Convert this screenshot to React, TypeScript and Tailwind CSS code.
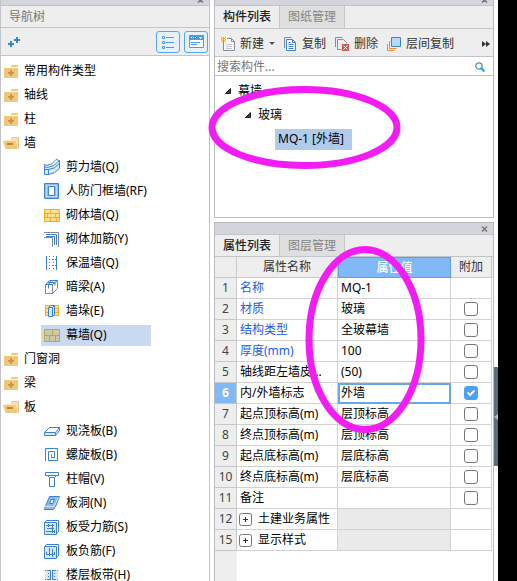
import { useState, type ReactNode } from "react"
import clsx from "clsx"

interface TreeItem {
  label: string
  icon?: ReactNode
  open?: boolean
}

interface Property {
  no: number
  name: string
  value?: string
  link?: boolean
  check?: boolean
  group?: boolean
}

const BLUE = "#3b84d4"
const PALE = "#d9e8fa"

function Icon({ children, size = 16 }: { children: ReactNode; size?: number }) {
  return (
    <svg
      width={size}
      height={size}
      viewBox={`0 0 ${size} ${size}`}
      fill="none"
      stroke={BLUE}
      className="shrink-0"
      aria-hidden="true"
    >
      {children}
    </svg>
  )
}

const ShearWallIcon = (
  <Icon>
    <path d="M.5 7.500L3 8.500Q10 8 15.500 1.500V9.500Q11 15 4.500 15.500H.5Z" fill={PALE} />
    <path d="M.5 10.500H4.500V15.500M.5 8V5.500L3 6.500Q9 5.500 12 .500L15.500 1.500M4.500 10.500Q11 10 15.500 4.500" />
  </Icon>
)

const FrameWallIcon = (
  <Icon>
    <path d="M.5.5h14v15H.5z" fill="#8db9ee" />
    <path d="M2.500 2.500h10v11h-10z" stroke="#c3dbf7" />
    <path d="M4.500 3.500h6v9h-6z" fill="#fff" />
  </Icon>
)

const MasonryIcon = (
  <Icon>
    <path
      d="M.5 2.500h15v12H.5zM.5 6.500h15M.5 10.500h15M6.500 2.500v4M3.500 6.500v4M11.500 6.500v4M6.500 10.500v4M12.500 10.500v4"
      fill="#ffdf94"
      stroke="#f9ae12"
    />
  </Icon>
)

const MasonryBarIcon = (
  <Icon>
    <path d="M0 1.500h14.500V16M0 6.500h8.500V16" stroke="#80898f" />
    <path d="M2 3.500h10.500V14M2 5.500h8.500V14" />
  </Icon>
)

const InsulationIcon = (
  <Icon>
    <path d="M2.500 1v14M12.500 1v14" />
    <path d="M5.500 1v14M9.500 1v14" strokeDasharray="1 2" />
    <path d="M2 4.500h11M2 10.500h11" strokeDasharray="1 2" />
  </Icon>
)

const HiddenBeamIcon = (
  <Icon>
    <path d="M1.500 5.500h7v9h-7zM8.500 14.500l5-5v-8" stroke="#80898f" fill="#fff" />
    <path d="M1.500 5.500l4-4h8l-5 4zM3.500 3.500h8M7.500 1.500l-3 4v4M11 3.500v3" fill={PALE} />
  </Icon>
)

const PierIcon = (
  <Icon>
    <path d="M1.500 2.500h13v10h-13zM1.500 5.500h13M1.500 9.500h13" fill="#ffdf94" stroke="#f9ae12" />
    <path d="M4.500 4.500l2-2h4v9l-2 2h-4zM4.500 4.500h4v9M8.500 4.500l2-2" fill={PALE} />
  </Icon>
)

const CurtainIcon = (
  <Icon>
    <path
      d="M.5 2.500h15v12H.5zM.5 8.500h15M8.500 2.500v6M5.500 8.500v6M11.500 8.500v6"
      fill="#c9c9a8"
      stroke="#c2a54a"
    />
  </Icon>
)

const SlabIcon = (
  <Icon>
    <path d="M.5 9.500l5-5h10v3l-4 5H.5z" fill={PALE} />
    <path d="M.5 9.500l5-5h10l-4 5zM11.500 9.500v3" fill="#fff" />
  </Icon>
)

const SpiralIcon = (
  <Icon>
    <path d="M1.500 14V1.500h12v12h-9v-9h6v6h-3v-3" />
  </Icon>
)

const CapitalIcon = (
  <Icon>
    <path d="M1.500 1.500h13v3h-13zM3.500 4.500l2 2h5l2-2M5.500 6.500v9h5v-9" fill="#fff" />
  </Icon>
)

const HoleIcon = (
  <Icon>
    <path d="M.5 13.500L5.500 1.500h10l-4 10-2 3H.5z" fill="#8db9ee" />
    <path d="M1 11.500h9l4.500-9" stroke={PALE} />
    <path d="M5.500 8.500l2-4h3l-2 4z" fill="#fff" />
  </Icon>
)

const SlabBarIcon = (
  <Icon>
    <path d="M.5 3.500l2-2h12v11l-2 2" fill="#fff" />
    <path d="M.5 3.500h12v12H.5z" fill={PALE} />
    <path d="M2 6.500h8M2 12.500h9M4.500 5v3M8.500 5v9M10.500 11v3M3 9.500h7" />
  </Icon>
)

const NegBarIcon = (
  <Icon>
    <path d="M.5 3.500l2-2h12v11l-2 2" fill="#fff" />
    <path d="M.5 3.500h12v12H.5z" fill={PALE} />
    <path d="M5.500 5v6M8.500 6v8M2.500 11V9M10.500 11V9M2 11.500h9M5.500 11v2" />
  </Icon>
)

const StripIcon = (
  <Icon>
    <path d="M1 3h13v10H1z" fill={PALE} stroke="none" />
    <path d="M1 3.500h13M1 12.500h13" strokeDasharray="1 1" />
    <path d="M4.500 3v10M10.500 3v10" strokeDasharray="1 2" />
    <path d="M7.500 3v10" stroke="#fff" strokeWidth="2" />
    <path d="M6.500 3v10M8.500 3v10" />
  </Icon>
)

function FolderIcon({ open }: { open?: boolean }) {
  return open ? (
    <svg width="16" height="12" viewBox="0 0 16 12" className="-ml-px shrink-0" aria-hidden="true">
      <path d="M3 3h5l1-2h7v10H4z" fill="#f7dfae" />
      <path d="M8 2.500L9.500.500h6v11" fill="none" stroke="#eec87e" />
      <path d="M0 4h12.500L15 12H2.500z" fill="#eec87e" />
      <path d="M4 6h6v2H4z" fill="#b98a2c" />
    </svg>
  ) : (
    <svg width="16" height="13" viewBox="0 0 16 13" className="-ml-px shrink-0" aria-hidden="true">
      <path d="M1 3h14v10H1zM8 1l1-1h5l1 1v1H8z" fill="#eec87e" />
      <path d="M5 7h2V5h2v2h2v2H9v2H7V9H5z" fill="#c99a3c" />
    </svg>
  )
}

const tree: TreeItem[] = [
  { label: "常用构件类型" },
  { label: "轴线" },
  { label: "柱" },
  { label: "墙", open: true },
  { label: "剪力墙(Q)", icon: ShearWallIcon },
  { label: "人防门框墙(RF)", icon: FrameWallIcon },
  { label: "砌体墙(Q)", icon: MasonryIcon },
  { label: "砌体加筋(Y)", icon: MasonryBarIcon },
  { label: "保温墙(Q)", icon: InsulationIcon },
  { label: "暗梁(A)", icon: HiddenBeamIcon },
  { label: "墙垛(E)", icon: PierIcon },
  { label: "幕墙(Q)", icon: CurtainIcon },
  { label: "门窗洞" },
  { label: "梁" },
  { label: "板", open: true },
  { label: "现浇板(B)", icon: SlabIcon },
  { label: "螺旋板(B)", icon: SpiralIcon },
  { label: "柱帽(V)", icon: CapitalIcon },
  { label: "板洞(N)", icon: HoleIcon },
  { label: "板受力筋(S)", icon: SlabBarIcon },
  { label: "板负筋(F)", icon: NegBarIcon },
  { label: "楼层板带(H)", icon: StripIcon },
]

const properties: Property[] = [
  { no: 1, name: "名称", value: "MQ-1", link: true },
  { no: 2, name: "材质", value: "玻璃", link: true, check: false },
  { no: 3, name: "结构类型", value: "全玻幕墙", link: true, check: false },
  { no: 4, name: "厚度(mm)", value: "100", link: true, check: false },
  { no: 5, name: "轴线距左墙皮...", value: "(50)", check: false },
  { no: 6, name: "内/外墙标志", value: "外墙", check: true },
  { no: 7, name: "起点顶标高(m)", value: "层顶标高", check: false },
  { no: 8, name: "终点顶标高(m)", value: "层顶标高", check: false },
  { no: 9, name: "起点底标高(m)", value: "层底标高", check: false },
  { no: 10, name: "终点底标高(m)", value: "层底标高", check: false },
  { no: 11, name: "备注", value: "", check: false },
  { no: 12, name: "土建业务属性", group: true },
  { no: 15, name: "显示样式", group: true },
]

// Grey strip above each docked panel
function DockBar({ short }: { short?: boolean }) {
  return (
    <div
      className={clsx(
        "flex shrink-0 items-end justify-end overflow-hidden border-b border-[#c3c4c9] bg-[#d4d5da] pr-[5px]",
        short ? "h-[6px] pb-[2px]" : "h-3 pb-[2px]",
      )}
    >
      <button type="button" aria-label="关闭">
        <svg width="7" height="6" viewBox="0 0 7 6" className="block" stroke="#77787c" strokeWidth="1.500">
          <path d="M1 .5l5 5M6 .5l-5 5" />
        </svg>
      </button>
    </div>
  )
}

function Tabs({ labels, compact }: { labels: string[]; compact?: boolean }) {
  return (
    <div
      role="tablist"
      className={clsx("flex shrink-0 border-b border-[#c3c4c9] bg-[#eeeeee]", compact ? "h-[22px]" : "h-[23px]")}
    >
      {labels.map((label, i) => (
        <button
          key={label}
          type="button"
          role="tab"
          aria-selected={i === 0}
          className={clsx(
            "border-r border-[#c8c8c8] px-2",
            i === 0 ? "font-medium text-[#222222]" : "bg-[#dfdfdf] text-[#858585]",
          )}
        >
          {label}
        </button>
      ))}
    </div>
  )
}

function NavTree() {
  const [selected, setSelected] = useState("幕墙(Q)")

  return (
    <nav className="flex w-[210px] shrink-0 flex-col border-x border-[#c3c4c9] bg-white">
      <DockBar short />
      <h2 className="flex h-[22px] shrink-0 items-center border-b border-[#c3c4c9] bg-[#eeeeee] pl-2 text-[#777777]">
        导航树
      </h2>
      <div className="flex h-7 shrink-0 items-center gap-1 border-b border-[#c3c4c9] bg-[#eeeeee] pr-px pl-[7px]">
        <button type="button" aria-label="添加" className="mr-auto">
          <svg width="12" height="10" viewBox="0 0 12 10" stroke={BLUE} strokeWidth="2" className="block">
            <path d="M0 7h6M3 4v6M6 3h6M9 0v6" />
          </svg>
        </button>
        <button
          type="button"
          aria-label="列表"
          className="flex h-[22px] w-6 items-center justify-center rounded-[3px] border border-[#5aa4f2] bg-[#e6f1fd]"
        >
          <svg width="14" height="14" viewBox="0 0 14 14" fill="none" stroke="#4a9af0">
            <path d="M1.500 1.500h2v2h-2zM1.500 6.500h2v2h-2zM1.500 11.500h2v2h-2zM5 2.500h8M5 7.500h8M5 12.500h8" />
          </svg>
        </button>
        <button
          type="button"
          aria-label="窗口"
          className="flex h-[22px] w-6 items-center justify-center rounded-[3px] border border-[#5aa4f2] bg-[#e6f1fd]"
        >
          <svg width="15" height="13" viewBox="0 0 15 13" fill="none">
            <path d="M.5.5h14v12H.5z" fill="#fff" stroke="#4a9af0" />
            <path d="M0 0h15v5H0z" fill="#4a9af0" />
            <path d="M2 2.500h1M4 2.500h1M6 2.500h1M10 2.500h3M11.500 2v2" stroke="#fff" />
            <path d="M2 7.500h9M2 9.500h6" stroke="#4a9af0" />
          </svg>
        </button>
      </div>
      <ul className="min-h-0 flex-1 overflow-hidden pt-[3px]">
        {tree.map((item) => (
          <li key={item.label} className="flex h-6 items-center">
            {item.icon ? (
              <button
                type="button"
                onClick={() => setSelected(item.label)}
                className={clsx(
                  "ml-10 flex h-[21px] min-w-[110px] items-center gap-[6px] pl-[3px]",
                  selected === item.label && "bg-[#c9d9ef]",
                )}
              >
                {item.icon}
                {item.label}
              </button>
            ) : (
              <button type="button" aria-expanded={!!item.open} className="ml-[3px] flex items-center gap-[5px]">
                <FolderIcon open={item.open} />
                {item.label}
              </button>
            )}
          </li>
        ))}
      </ul>
    </nav>
  )
}

function Arrow() {
  return (
    <svg width="6" height="6" viewBox="0 0 6 6" className="shrink-0" aria-hidden="true">
      <path d="M5.500.5v5h-5z" fill="#404040" stroke="#222" />
    </svg>
  )
}

function ComponentPanel() {
  return (
    <section className="flex shrink-0 flex-col border border-t-0 border-[#b9babd] bg-white">
      <DockBar short />
      <Tabs labels={["构件列表", "图纸管理"]} />
      <div className="flex h-7 shrink-0 items-center gap-[9px] border-b border-[#c3c4c9] bg-[#eeeeee] pt-[2px] pr-[3px] pl-[6px] text-[#333333]">
        <button type="button" className="flex items-center gap-[5px]">
          <Icon size={14}>
            <path d="M2.500 3v10.500h11v-9l-3-3H6M10.500 1.500v3h3" stroke="#82909c" fill="#f8f8f8" />
            <path d="M5 7.500h6M5 9.500h6M5 11.500h6" stroke="#c2c8cd" />
            <path
              d="M0 .5h1M2 .5h1M4 .5h1M1 1.500h3M0 2.500h1M2 2.500h1M4 2.500h1M1 3.500h3M0 4.500h1M4 4.500h1"
              stroke="#f39a1f"
            />
          </Icon>
          新建
          <svg width="6" height="3" viewBox="0 0 6 3" fill="#555" aria-hidden="true">
            <path d="M0 0h6L3 3z" />
          </svg>
        </button>
        <button type="button" className="flex items-center gap-[5px]">
          <svg width="13" height="14" viewBox="0 0 13 14" fill="none" aria-hidden="true">
            <path d="M.5 11V.5h7" stroke="#82909c" />
            <path d="M2.500 2.500h6l3 3v8h-9z" fill="#fff" stroke={BLUE} />
            <path d="M8.500 2.500v3h3M4.500 5.500h2M4.500 7.500h5M4.500 9.500h5M4.500 11.500h5" stroke={BLUE} />
          </svg>
          复制
        </button>
        <button type="button" className="flex items-center gap-[5px]">
          <Icon size={14}>
            <path d="M.5 10V.5h7M2.500 12.500v-10h6l3 3v1M2.500 12.500h4" stroke="#82909c" />
            <path d="M7 7h7v7H7z" fill="#d9534f" stroke="none" />
            <path d="M8.500 8.500l4 4M12.500 8.500l-4 4" stroke="#fff" />
          </Icon>
          删除
        </button>
        <button type="button" className="flex items-center gap-[5px]">
          <Icon size={14}>
            <path d="M.5 7v6.500h7" stroke="#f08a35" />
            <path d="M2.500 4v7.500h7" stroke="#f08a35" />
            <path d="M4.500.5h9v9h-9z" fill="#b9d9fb" />
          </Icon>
          层间复制
        </button>
        <button type="button" aria-label="更多" className="ml-auto">
          <svg width="8" height="6" viewBox="0 0 8 6" fill="#333" className="block">
            <path d="M0 0l4 3-4 3zM4 0l4 3-4 3z" />
          </svg>
        </button>
      </div>
      <label className="flex h-[19px] shrink-0 items-center border-b border-[#c3c4c9] pt-[2px] pr-2 pl-[2px]">
        <input
          type="text"
          aria-label="搜索构件"
          placeholder="搜索构件..."
          className="min-w-0 flex-1 bg-transparent outline-none placeholder:text-[#777777]"
        />
        <svg width="10" height="10" viewBox="0 0 10 10" fill="none" stroke="#3b95c9" aria-hidden="true">
          <circle cx="4" cy="4" r="3.200" strokeWidth="1.300" />
          <path d="M6.500 6.500l3 3" strokeWidth="2" />
        </svg>
      </label>
      <ul className="min-h-[141px] pt-[3px]">
        <li className="flex h-6 items-center gap-[7px] pl-[10px]">
          <Arrow />
          幕墙
        </li>
        <li className="flex h-6 items-center gap-[7px] pl-[30px]">
          <Arrow />
          玻璃
        </li>
        <li className="flex h-6 items-center pl-[60px]">
          <button type="button" className="h-[21px] min-w-[77px] bg-[#b1cbec] px-[3px] text-left">
            MQ-1 [外墙]
          </button>
        </li>
      </ul>
    </section>
  )
}

function CheckCell({ label, initial }: { label: string; initial: boolean }) {
  const [checked, setChecked] = useState(initial)

  return (
    <label className="grid place-items-center">
      <input
        type="checkbox"
        aria-label={label}
        checked={checked}
        onChange={(e) => setChecked(e.target.checked)}
        className="col-start-1 row-start-1 size-[14px] appearance-none rounded-[3px] border border-[#777777] bg-white checked:border-[#4f9ff7] checked:bg-[#4f9ff7]"
      />
      {checked && (
        <svg width="10" height="8" viewBox="0 0 10 8" fill="none" className="col-start-1 row-start-1" aria-hidden="true">
          <path d="M1.500 3.500L4 6l4.500-4.500" stroke="#fff" strokeWidth="2" />
        </svg>
      )}
    </label>
  )
}

function PropertyPanel() {
  const active = 6

  return (
    <section className="flex min-h-0 flex-1 flex-col border-x border-t border-[#b9babd] bg-white">
      <DockBar />
      <Tabs labels={["属性列表", "图层管理"]} compact />
      <table className="w-full shrink-0 table-fixed border-separate border-spacing-0">
        <colgroup>
          <col className="w-[22px]" />
          <col className="w-[101px]" />
          <col />
          <col className="w-[41px]" />
          <col className="w-px" />
        </colgroup>
        <thead>
          <tr className="h-[21px] bg-[#eeeeee] text-[#333333]">
            <th className="border-r border-b border-[#c8c8c8] p-0" />
            <th className="border-r border-b border-[#c8c8c8] p-0 font-normal">属性名称</th>
            <th className="border border-[#5f9fe0] bg-[#80b8f8] p-0 font-medium text-white">属性值</th>
            <th className="border-r border-b border-[#c8c8c8] p-0 font-normal">附加</th>
            <td className="p-0" />
          </tr>
        </thead>
        <tbody>
          {properties.map((p) => (
            <tr key={p.no} className="h-[21px]">
              <th
                scope="row"
                className={clsx(
                  "border-r border-b border-[#c8c8c8] p-0",
                  p.no === active ? "bg-[#80b8f8] font-bold text-white" : "bg-[#eeeeee] font-normal text-[#444444]",
                )}
              >
                {p.no}
              </th>
              <td
                className={clsx(
                  "border-r border-b border-[#d2d2d2] py-0 pr-0 whitespace-nowrap",
                  p.group ? "pl-[2px]" : "pl-[3px]",
                  p.link && "text-[#1a5cf0]",
                )}
              >
                {p.group ? (
                  <button type="button" className="flex items-center gap-[6px]">
                    <svg width="13" height="13" viewBox="0 0 13 13" fill="none" stroke="#777" aria-hidden="true">
                      <rect x=".5" y=".5" width="12" height="12" rx="2" fill="#fff" />
                      <path d="M4 6.500h5M6.500 4v5" stroke="#333" />
                    </svg>
                    {p.name}
                  </button>
                ) : (
                  p.name
                )}
              </td>
              <td
                className={clsx(
                  "border-r border-b border-[#d2d2d2] py-0 pr-0 pl-[3px]",
                  p.group && "bg-[#eaeaea]",
                  p.no === active && "outline-2 -outline-offset-2 outline-[#69a8e8]",
                )}
              >
                {p.value}
              </td>
              <td className="border-r border-b border-[#d2d2d2] p-0">
                {p.check !== undefined && <CheckCell label={`${p.name} 附加`} initial={p.check} />}
              </td>
              <td className="p-0" />
            </tr>
          ))}
        </tbody>
      </table>
      <div className="w-[22px] flex-1 bg-[#eeeeee]" />
    </section>
  )
}

export default function App() {
  return (
    <div className="relative flex h-screen overflow-hidden bg-white font-['Noto_Sans','Noto_Sans_CJK_SC',sans-serif] text-[12px] leading-[18px] text-black">
      <NavTree />
      <main className="ml-1 flex min-w-0 flex-1 flex-col gap-1">
        <ComponentPanel />
        <PropertyPanel />
      </main>
      <div className="w-1 shrink-0 pt-[367px]">
        <button type="button" aria-label="展开" className="flex h-[99px] w-1 items-center bg-[#5f6b78]">
          <svg width="4" height="6" viewBox="0 0 4 6" fill="#b8bec5">
            <path d="M4 0v6L0 3z" />
          </svg>
        </button>
      </div>
      <div className="w-[19px] shrink-0 bg-black" />

      {/* hand-drawn highlight rings */}
      <svg
        className="pointer-events-none absolute top-0 left-0"
        width="517"
        height="581"
        fill="none"
        stroke="#f31cf5"
        strokeWidth="7"
        aria-hidden="true"
      >
        <ellipse cx="304.500" cy="127.500" rx="92.500" ry="38" />
        <ellipse cx="365" cy="339.500" rx="56" ry="90" />
      </svg>
    </div>
  )
}
